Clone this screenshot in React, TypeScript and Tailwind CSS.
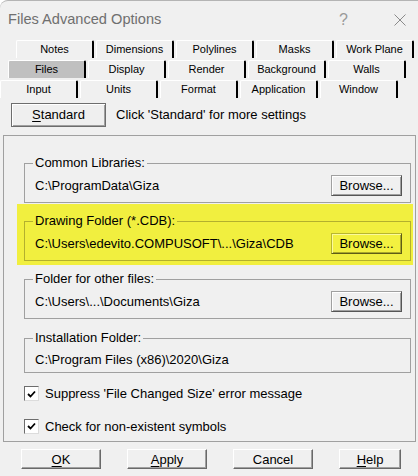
import React from 'react';

const tabRows = [
  { offset: 'ml-[16px]', tabs: ['Notes', 'Dimensions', 'Polylines', 'Masks', 'Work Plane'] },
  { offset: 'ml-[8px]', tabs: ['Files', 'Display', 'Render', 'Background', 'Walls'] },
  { offset: 'ml-0', tabs: ['Input', 'Units', 'Format', 'Application', 'Window'] },
];

function Tab({ label }: { label: string }) {
  const active = label === 'Files';
  return (
    <div
      className={`w-[78px] h-[18px] flex items-center justify-center border-t border-l border-white border-r-2 border-r-black rounded-t-[2px] text-[11px] text-black ${
        active ? 'bg-[#c0c0c0]' : 'bg-[#f0f0f0]'
      }`}
    >
      {label}
    </div>
  );
}

function Browse({ hi }: { hi?: boolean }) {
  return (
    <button
      className={
        hi
          ? 'w-[71px] h-[21px] text-[13px] text-black bg-[#f3f140] border border-t-[#b8b62e] border-l-[#b8b62e] border-r-[#5e5c16] border-b-[#5e5c16] shadow-[inset_1px_1px_0_#fbfa9a,inset_-1px_-1px_0_#a9a72a]'
          : 'w-[71px] h-[21px] text-[13px] text-black bg-[#f0f0f0] border border-t-[#a0a0a0] border-l-[#a0a0a0] border-r-[#555] border-b-[#555] shadow-[inset_1px_1px_0_#fff,inset_-1px_-1px_0_#a0a0a0]'
      }
    >
      Browse...
    </button>
  );
}

function Group({
  title,
  path,
  button,
  hi,
  tall = true,
}: {
  title: string;
  path: string;
  button?: boolean;
  hi?: boolean;
  tall?: boolean;
}) {
  return (
    <div
      className={`relative w-[387px] border ${hi ? 'border-[#b3b02e]' : 'border-[#a0a0a0]'} ${
        tall ? 'h-[40px] pt-[11px]' : 'h-[35px] pt-[10px]'
      } pl-[10px] pr-[8px]`}
    >
      <span
        className={`absolute -top-[9px] left-[8px] px-[2px] text-[13px] leading-[16px] text-black ${
          hi ? 'bg-[#f1ef3f]' : 'bg-[#f0f0f0]'
        }`}
      >
        {title}
      </span>
      <div className="h-[21px] flex items-center justify-between">
        <span className="text-[13px] text-black">{path}</span>
        {button && <Browse hi={hi} />}
      </div>
    </div>
  );
}

function Check({ label }: { label: string }) {
  return (
    <div className="flex items-center gap-[6px] ml-[20px]">
      <div className="w-[15px] h-[15px] bg-white border border-t-[#6d6d6d] border-l-[#6d6d6d] border-r-[#dcdcdc] border-b-[#dcdcdc] flex items-center justify-center">
        <svg width="9" height="8" viewBox="0 0 9 8">
          <path d="M1 4 L3.5 6.5 L8 1.5" stroke="#000" strokeWidth="1.8" fill="none" />
        </svg>
      </div>
      <span className="text-[13px] text-black">{label}</span>
    </div>
  );
}

function DlgButton({ children, w = 'w-[80px]' }: { children: React.ReactNode; w?: string }) {
  return (
    <button
      className={`${w} h-[20px] text-[13px] text-black bg-[#f0f0f0] border border-t-white border-l-white border-r-[#696969] border-b-[#696969] shadow-[inset_-1px_-1px_0_#a0a0a0]`}
    >
      {children}
    </button>
  );
}

export default function App() {
  return (
    <div className="w-[418px] h-[476px] bg-[#f0f0f0] overflow-hidden font-['Liberation_Sans',Arial,sans-serif] border-t border-[#b4b4b4] rounded-tl-[8px] flex flex-col">
      <div className="h-[37px] flex items-center pl-[8px] pr-[10px]">
        <span className="text-[14.6px] text-[#6f6f6f]">Files Advanced Options</span>
        <span className="ml-auto mr-[46px] text-[16px] text-[#9a9a9a]">?</span>
        <svg width="12" height="12" viewBox="0 0 12 12" className="mr-[2px]">
          <path d="M0.5 0.5 L11.5 11.5 M11.5 0.5 L0.5 11.5" stroke="#8a8a8a" strokeWidth="1" />
        </svg>
      </div>

      <div className="flex flex-col gap-[2px] mt-[2px]">
        {tabRows.map((row, i) => (
          <div key={i} className={`flex gap-[2px] ${row.offset}`}>
            {row.tabs.map((t) => (
              <Tab key={t} label={t} />
            ))}
          </div>
        ))}
      </div>

      <div className="flex items-center mt-[5px] ml-[11px] gap-[10px]">
        <button className="w-[95px] h-[24px] text-[13px] text-black bg-[#efefef] border border-[#6d6d6d] shadow-[inset_1px_1px_0_#fff,inset_-1px_-1px_0_#a0a0a0]">
          <span className="underline underline-offset-2">S</span>tandard
        </button>
        <span className="text-[13px] text-black">Click 'Standard' for more settings</span>
      </div>

      <div className="mt-[8px] ml-[3px] w-[413px] h-[307px] border border-[#a0a0a0] flex flex-col">
        <div className="mt-[27px] ml-[20px]">
          <Group title="Common Libraries:" path="C:\ProgramData\Giza" button />
        </div>

        <div className="mt-[1px] ml-[13px] w-[396px] h-[61px] bg-[#f1ef3f] pt-[17px] pl-[7px]">
          <Group title="Drawing Folder (*.CDB):" path="C:\Users\edevito.COMPUSOFT\...\Giza\CDB" button hi />
        </div>

        <div className="mt-[14px] ml-[20px]">
          <Group title="Folder for other files:" path="C:\Users\...\Documents\Giza" button />
        </div>

        <div className="mt-[19px] ml-[20px]">
          <Group title="Installation Folder:" path="C:\Program Files (x86)\2020\Giza" tall={false} />
        </div>

        <div className="mt-[11px] flex flex-col gap-[13px]">
          <Check label="Suppress 'File Changed Size' error message" />
          <Check label="Check for non-existent symbols" />
        </div>
      </div>

      <div className="mt-[7px] ml-[21px] flex gap-[26px]">
        <DlgButton>
          <span className="underline underline-offset-2">O</span>K
        </DlgButton>
        <DlgButton>
          <span className="underline underline-offset-2">A</span>pply
        </DlgButton>
        <DlgButton>Cancel</DlgButton>
        <DlgButton w="w-[62px]">
          <span className="underline underline-offset-2">H</span>elp
        </DlgButton>
      </div>
    </div>
  );
}
